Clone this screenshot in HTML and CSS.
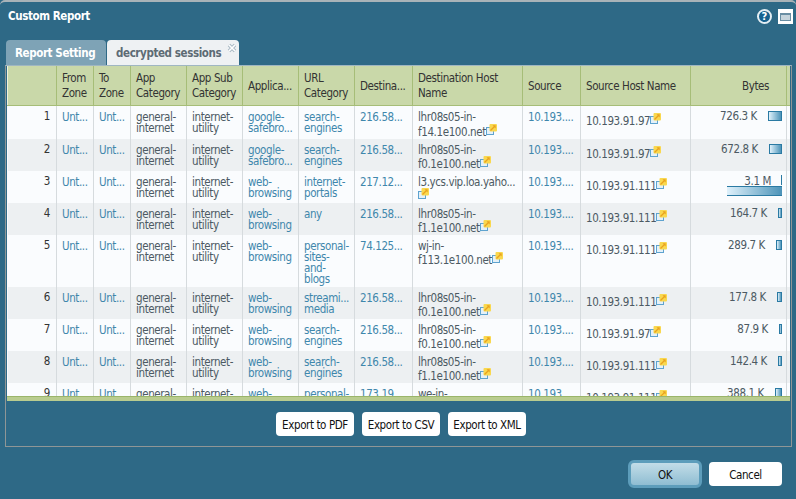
FILE: index.html
```html
<!DOCTYPE html>
<html lang="en">
<head>
<meta charset="utf-8">
<title>Custom Report</title>
<link rel="stylesheet" href="styles.css">
</head>
<body>
<svg class="defs" width="0" height="0" aria-hidden="true">
  <symbol id="link" viewBox="0 0 11 11">
    <rect x="0.5" y="3.5" width="7" height="7" fill="#e4f1f9" stroke="#5ea3cf"/>
    <rect x="3.5" y="0" width="7.5" height="7.5" rx="1" fill="#f9d84f"/>
    <path d="M4.5 6.5L8.5 2.5" stroke="#e9a21f" stroke-width="1.2"/>
    <path d="M6.5 1.3h3.2v3.2z" fill="#e9a21f"/>
  </symbol>
</svg>
<div class="dialog">
  <header class="title-bar">
    <h1 class="title">Custom Report</h1>
    <div class="tools">
      <span class="help">?</span>
      <span class="restore"><i></i></span>
    </div>
  </header>
  <div class="tabs">
    <span class="tab tab-off">Report Setting</span>
    <span class="tab tab-on">decrypted sessions<svg class="tab-x" viewBox="0 0 10 10"><path d="M2 2l6 6M8 2l-6 6" stroke="#a9b9c3" stroke-width="3.4"/><path d="M2 2l6 6M8 2l-6 6" stroke="#fff" stroke-width="1.6"/></svg></span>
  </div>
  <section class="panel">
    <div class="grid-wrap">
      <table class="grid">
        <colgroup>
          <col class="c0"><col class="c1"><col class="c2"><col class="c3"><col class="c4"><col class="c5"><col class="c6"><col class="c7"><col class="c8"><col class="c9"><col class="c10"><col class="c11"><col class="c12">
        </colgroup>
        <thead>
          <tr>
            <th></th><th>From Zone</th><th>To Zone</th><th>App Category</th><th>App Sub Category</th><th>Applica...</th><th>URL Category</th><th>Destina...</th><th>Destination Host Name</th><th>Source</th><th>Source Host Name</th><th class="th-bytes">Bytes</th><th class="pad"></th>
          </tr>
        </thead>
        <tbody>
          <tr class="h33">
            <td class="num">1</td><td class="lk">Unt...</td><td class="lk">Unt...</td><td>general-internet</td><td>internet-utility</td><td class="lk">google-safebro...</td><td class="lk">search-engines</td><td class="lk">216.58...</td>
            <td class="host">lhr08s05-in-<br>f14.1e100.net<svg class="ico"><use href="#link"/></svg></td><td class="lk">10.193....</td><td class="host single">10.193.91.97<svg class="ico"><use href="#link"/></svg></td>
            <td><div class="bytes"><span>726.3 K</span><b class="bar w14"></b></div></td><td class="pad"></td>
          </tr>
          <tr class="alt h32">
            <td class="num">2</td><td class="lk">Unt...</td><td class="lk">Unt...</td><td>general-internet</td><td>internet-utility</td><td class="lk">google-safebro...</td><td class="lk">search-engines</td><td class="lk">216.58...</td>
            <td class="host">lhr08s05-in-<br>f0.1e100.net<svg class="ico"><use href="#link"/></svg></td><td class="lk">10.193....</td><td class="host single">10.193.91.97<svg class="ico"><use href="#link"/></svg></td>
            <td><div class="bytes"><span>672.8 K</span><b class="bar w13"></b></div></td><td class="pad"></td>
          </tr>
          <tr class="h31">
            <td class="num">3</td><td class="lk">Unt...</td><td class="lk">Unt...</td><td>general-internet</td><td>internet-utility</td><td class="lk">web-browsing</td><td class="lk">internet-portals</td><td class="lk">217.12...</td>
            <td class="host">l3.ycs.vip.loa.yaho...<br><svg class="ico"><use href="#link"/></svg></td><td class="lk">10.193....</td><td class="host single">10.193.91.111<svg class="ico"><use href="#link"/></svg></td>
            <td><div class="bytes bytes-full"><span>3.1 M</span><b class="tick"></b><b class="bar-full"></b></div></td><td class="pad"></td>
          </tr>
          <tr class="alt h32">
            <td class="num">4</td><td class="lk">Unt...</td><td class="lk">Unt...</td><td>general-internet</td><td>internet-utility</td><td class="lk">web-browsing</td><td class="lk">any</td><td class="lk">216.58...</td>
            <td class="host">lhr08s05-in-<br>f1.1e100.net<svg class="ico"><use href="#link"/></svg></td><td class="lk">10.193....</td><td class="host single">10.193.91.111<svg class="ico"><use href="#link"/></svg></td>
            <td><div class="bytes"><span>164.7 K</span><b class="bar w4"></b></div></td><td class="pad"></td>
          </tr>
          <tr class="h52">
            <td class="num">5</td><td class="lk">Unt...</td><td class="lk">Unt...</td><td>general-internet</td><td>internet-utility</td><td class="lk">web-browsing</td><td class="lk">personal-<br>sites-<br>and-<br>blogs</td><td class="lk">74.125...</td>
            <td class="host">wj-in-<br>f113.1e100.net<svg class="ico"><use href="#link"/></svg></td><td class="lk">10.193....</td><td class="host single">10.193.91.111<svg class="ico"><use href="#link"/></svg></td>
            <td><div class="bytes"><span>289.7 K</span><b class="bar w6"></b></div></td><td class="pad"></td>
          </tr>
          <tr class="alt h32">
            <td class="num">6</td><td class="lk">Unt...</td><td class="lk">Unt...</td><td>general-internet</td><td>internet-utility</td><td class="lk">web-browsing</td><td class="lk">streami...<br>media</td><td class="lk">216.58...</td>
            <td class="host">lhr08s05-in-<br>f0.1e100.net<svg class="ico"><use href="#link"/></svg></td><td class="lk">10.193....</td><td class="host single">10.193.91.111<svg class="ico"><use href="#link"/></svg></td>
            <td><div class="bytes"><span>177.8 K</span><b class="bar w5"></b></div></td><td class="pad"></td>
          </tr>
          <tr class="h32">
            <td class="num">7</td><td class="lk">Unt...</td><td class="lk">Unt...</td><td>general-internet</td><td>internet-utility</td><td class="lk">web-browsing</td><td class="lk">search-engines</td><td class="lk">216.58...</td>
            <td class="host">lhr08s05-in-<br>f0.1e100.net<svg class="ico"><use href="#link"/></svg></td><td class="lk">10.193....</td><td class="host single">10.193.91.97<svg class="ico"><use href="#link"/></svg></td>
            <td><div class="bytes"><span>87.9 K</span><b class="bar w3"></b></div></td><td class="pad"></td>
          </tr>
          <tr class="alt h32">
            <td class="num">8</td><td class="lk">Unt...</td><td class="lk">Unt...</td><td>general-internet</td><td>internet-utility</td><td class="lk">web-browsing</td><td class="lk">search-engines</td><td class="lk">216.58...</td>
            <td class="host">lhr08s05-in-<br>f1.1e100.net<svg class="ico"><use href="#link"/></svg></td><td class="lk">10.193....</td><td class="host single">10.193.91.111<svg class="ico"><use href="#link"/></svg></td>
            <td><div class="bytes"><span>142.4 K</span><b class="bar w4"></b></div></td><td class="pad"></td>
          </tr>
          <tr class="h52">
            <td class="num">9</td><td class="lk">Unt...</td><td class="lk">Unt...</td><td>general-internet</td><td>internet-utility</td><td class="lk">web-browsing</td><td class="lk">personal-<br>sites-<br>and-<br>blogs</td><td class="lk">173.19...</td>
            <td class="host">we-in-<br>f113.1e100.net<svg class="ico"><use href="#link"/></svg></td><td class="lk">10.193....</td><td class="host single">10.193.91.111<svg class="ico"><use href="#link"/></svg></td>
            <td><div class="bytes"><span>388.1 K</span><b class="bar w8"></b></div></td><td class="pad"></td>
          </tr>
        </tbody>
      </table>
    </div>
    <div class="grid-foot"></div>
    <div class="exports">
      <button class="btn btn-export">Export to PDF</button>
      <button class="btn btn-export">Export to CSV</button>
      <button class="btn btn-export">Export to XML</button>
    </div>
  </section>
  <footer class="actions">
    <button class="btn btn-ok">OK</button>
    <button class="btn btn-cancel">Cancel</button>
  </footer>
</div>
</body>
</html>
```

FILE: styles.css
```css
html, body {
  margin: 0;
  padding: 0;
  background: #2e6986;
}
.defs { position: absolute; }
.dialog {
  box-sizing: border-box;
  width: 796px;
  height: 499px;
  overflow: hidden;
  background: #2e6986;
  border-top: 2px solid #a9b3b8;
  border-radius: 5px 5px 0 0;
  font-family: "DejaVu Sans", sans-serif;
  font-stretch: condensed;
  font-size: 11.5px;
  letter-spacing: -0.4px;
  color: #4c5a63;
  padding: 0 4px 0 5px;
}
.title-bar {
  display: flex;
  justify-content: space-between;
  align-items: flex-start;
  height: 38px;
}
.title {
  margin: 7px 0 0 3px;
  font-size: 11.5px;
  line-height: 14px;
  font-weight: bold;
  color: #fff;
}
.tools {
  display: flex;
  align-items: center;
  gap: 6px;
  margin: 7px -1px 0 0;
}
.help {
  box-sizing: border-box;
  width: 15px;
  height: 15px;
  border-radius: 50%;
  border: 2px solid #e4eef3;
  background: #17628f;
  color: #fff;
  font: bold 10px/11px "DejaVu Sans", sans-serif;
  letter-spacing: 0;
  text-align: center;
}
.restore {
  box-sizing: border-box;
  display: flex;
  align-items: center;
  justify-content: center;
  width: 15px;
  height: 15px;
  background: #fff;
}
.restore i {
  box-sizing: border-box;
  width: 11px;
  height: 8px;
  background: #c6d4dc;
  border: 1px solid #6a8ea3;
  border-top-width: 2px;
}
.tabs {
  display: flex;
  gap: 1px;
  height: 25px;
  padding-left: 1px;
}
.tab {
  box-sizing: border-box;
  display: flex;
  align-items: center;
  height: 25px;
  font-weight: bold;
  border-radius: 4px 4px 0 0;
}
.tab-off {
  width: 100px;
  padding-left: 9px;
  background: #7ea3b6;
  color: #fff;
}
.tab-on {
  position: relative;
  width: 132px;
  padding-left: 9px;
  background: #eef1f3;
  color: #5d6b74;
}
.tab-x {
  position: absolute;
  top: 3px;
  right: 2px;
  width: 10px;
  height: 10px;
}
.panel {
  box-sizing: border-box;
  height: 382px;
  border: 1px solid #8f9696;
  border-top-color: #9fb6c2;
  padding: 0 1px 0 1px;
}
.grid-wrap {
  height: 330px;
  overflow: hidden;
  background: #fafcfe;
}
.grid {
  table-layout: fixed;
  border-collapse: collapse;
  width: 783px;
}
.c0 { width: 49px; }
.c1 { width: 37px; }
.c2 { width: 37px; }
.c3 { width: 56px; }
.c4 { width: 56px; }
.c5 { width: 56px; }
.c6 { width: 56px; }
.c7 { width: 58px; }
.c8 { width: 110px; }
.c9 { width: 58px; }
.c10 { width: 110px; }
.c11 { width: 96px; }
.c12 { width: 4px; }
.grid th {
  height: 38px;
  padding: 1px 0 0 5px;
  background: #c9d8a9;
  border-left: 1px solid #eef3de;
  border-right: 1px solid #a6bd78;
  border-bottom: 1px solid #a6bd78;
  color: #333;
  font-weight: normal;
  text-align: left;
  line-height: 15px;
  vertical-align: middle;
}
.grid th.th-bytes {
  text-align: right;
  padding-right: 17px;
}
.grid td {
  padding: 6px 0 0 5px;
  border-right: 1px solid #d6dbde;
  line-height: 11px;
  vertical-align: top;
  overflow: hidden;
}
.grid th.pad, .grid td.pad {
  padding: 0;
  border: 0;
}
.grid th.pad { border-bottom: 1px solid #a6bd78; }
.h33 { height: 33px; }
.h32 { height: 32px; }
.h31 { height: 31px; }
.h52 { height: 52px; }
.alt td { background: #edf0f2; }
.grid td.num {
  padding: 5px 6px 0 0;
  text-align: right;
  color: #333;
}
.grid td.lk { color: #3f87ac; }
.grid td.host { line-height: 12.5px; padding-top: 5px; }
.grid td.single { padding-top: 7px; white-space: nowrap; }
.ico {
  width: 11px;
  height: 11px;
  vertical-align: 1px;
}
.bytes {
  display: flex;
  justify-content: flex-end;
  align-items: flex-start;
  gap: 11px;
  padding-right: 4px;
}
.bytes span { margin-top: -1px; }
.bar {
  box-sizing: border-box;
  height: 10px;
  margin-top: -1px;
  border: 1px solid #2a7aa3;
  background: linear-gradient(90deg, #dff1fb, #4c93b8);
}
.w3 { width: 3px; }
.w4 { width: 4px; }
.w5 { width: 5px; }
.w6 { width: 6px; }
.w8 { width: 7px; }
.w13 { width: 13px; }
.w14 { width: 14px; }
.bytes-full {
  position: relative;
  flex-wrap: wrap;
  gap: 0;
  height: 20px;
}
.bytes-full span { margin-right: 11px; }
.bar-full {
  box-sizing: border-box;
  flex: 0 0 55px;
  height: 10px;
  margin-top: -1px;
  border-top: 1px solid #2a7aa3;
  border-bottom: 1px solid #2a7aa3;
  background: linear-gradient(90deg, #dff1fb, #4c93b8);
}
.tick {
  position: absolute;
  right: 4px;
  top: -2px;
  width: 1px;
  height: 10px;
  background: #2a7aa3;
}
.grid-foot {
  height: 5px;
  background: #b9cc8f;
  border-top: 1px solid #9ab56a;
  box-sizing: border-box;
}
.exports {
  display: flex;
  gap: 8px;
  padding: 11px 0 0 269px;
}
.btn {
  box-sizing: border-box;
  height: 24px;
  padding: 1px 0 0;
  background: #fff;
  border: 0;
  border-radius: 4px;
  color: #111;
  font-family: "DejaVu Sans", sans-serif;
  font-stretch: condensed;
  font-size: 11.5px;
  letter-spacing: -0.4px;
}
.btn-export { width: 78px; }
.actions {
  display: flex;
  justify-content: flex-end;
  align-items: center;
  gap: 7px;
  padding: 13px 10px 0 0;
}
.btn-ok {
  width: 74px;
  height: 28px;
  border: 3px solid #5d9dbb;
  border-radius: 6px;
  background: linear-gradient(#c3dde8, #8fbdd2);
}
.btn-cancel { width: 73px; }
```
